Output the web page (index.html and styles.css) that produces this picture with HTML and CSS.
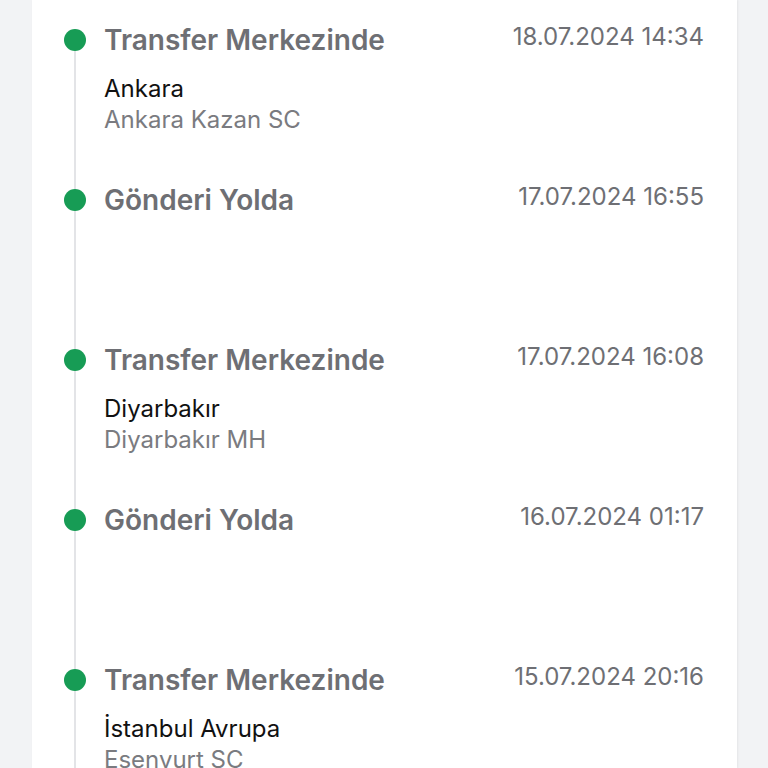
FILE: index.html
```html
<!DOCTYPE html>
<html lang="tr">
<head>
    <meta charset="UTF-8">
    <meta name="viewport" content="width=device-width, initial-scale=1.0">
    <title>Gönderi Takibi</title>
    <link rel="stylesheet" href="styles.css">
</head>
<body>
<div class="card">
    <ul class="timeline">
        <li class="step">
            <div class="marker"><span class="dot"></span></div>
            <div class="info">
                <div class="head">
                    <span class="status">Transfer Merkezinde</span>
                    <span class="date">18.07.2024 14:34</span>
                </div>
                <div class="city">Ankara</div>
                <div class="branch">Ankara Kazan SC</div>
            </div>
        </li>
        <li class="step">
            <div class="marker"><span class="dot"></span></div>
            <div class="info">
                <div class="head">
                    <span class="status">Gönderi Yolda</span>
                    <span class="date">17.07.2024 16:55</span>
                </div>
            </div>
        </li>
        <li class="step">
            <div class="marker"><span class="dot"></span></div>
            <div class="info">
                <div class="head">
                    <span class="status">Transfer Merkezinde</span>
                    <span class="date">17.07.2024 16:08</span>
                </div>
                <div class="city">Diyarbakır</div>
                <div class="branch">Diyarbakır MH</div>
            </div>
        </li>
        <li class="step">
            <div class="marker"><span class="dot"></span></div>
            <div class="info">
                <div class="head">
                    <span class="status">Gönderi Yolda</span>
                    <span class="date">16.07.2024 01:17</span>
                </div>
            </div>
        </li>
        <li class="step">
            <div class="marker"><span class="dot"></span></div>
            <div class="info">
                <div class="head">
                    <span class="status">Transfer Merkezinde</span>
                    <span class="date">15.07.2024 20:16</span>
                </div>
                <div class="city">İstanbul Avrupa</div>
                <div class="branch">Esenyurt SC</div>
            </div>
        </li>
    </ul>
</div>
</body>
</html>
```

FILE: styles.css
```css
body {
    margin: 0;
    padding: 0;
    background: #f2f3f5;
    font-family: Inter, "Noto Sans", sans-serif;
    overflow: hidden;
}

.card {
    margin-left: 32px;
    width: 705px;
    height: 768px;
    background: #fff;
    box-shadow: 1px 0 2px rgba(0, 0, 0, 0.06);
    padding: 22px 33px 0 32px;
    box-sizing: border-box;
}

.timeline {
    list-style: none;
    margin: 0;
    padding: 0;
}

.step {
    display: flex;
    gap: 18px;
    height: 160px;
}

.marker {
    width: 22px;
    flex-shrink: 0;
    background: linear-gradient(#e3e4e7, #e3e4e7) center top / 2px 100% no-repeat;
}

.step:first-child .marker {
    background-position: center bottom;
    background-size: 2px calc(100% - 18px);
}

.dot {
    display: block;
    width: 22px;
    height: 22px;
    margin-top: 7px;
    border-radius: 50%;
    background: #179c55;
}

.info {
    flex: 1;
}

.head {
    display: flex;
    justify-content: space-between;
    align-items: flex-start;
}

.status {
    font-size: 28px;
    line-height: 36px;
    font-weight: 600;
    color: #6e6f74;
}

.date {
    font-size: 24px;
    line-height: 30px;
    color: #6e6f74;
}

.city {
    margin-top: 15px;
    font-size: 24px;
    line-height: 31px;
    color: #111;
}

.branch {
    font-size: 24px;
    line-height: 31px;
    color: #7a7b80;
}
```
